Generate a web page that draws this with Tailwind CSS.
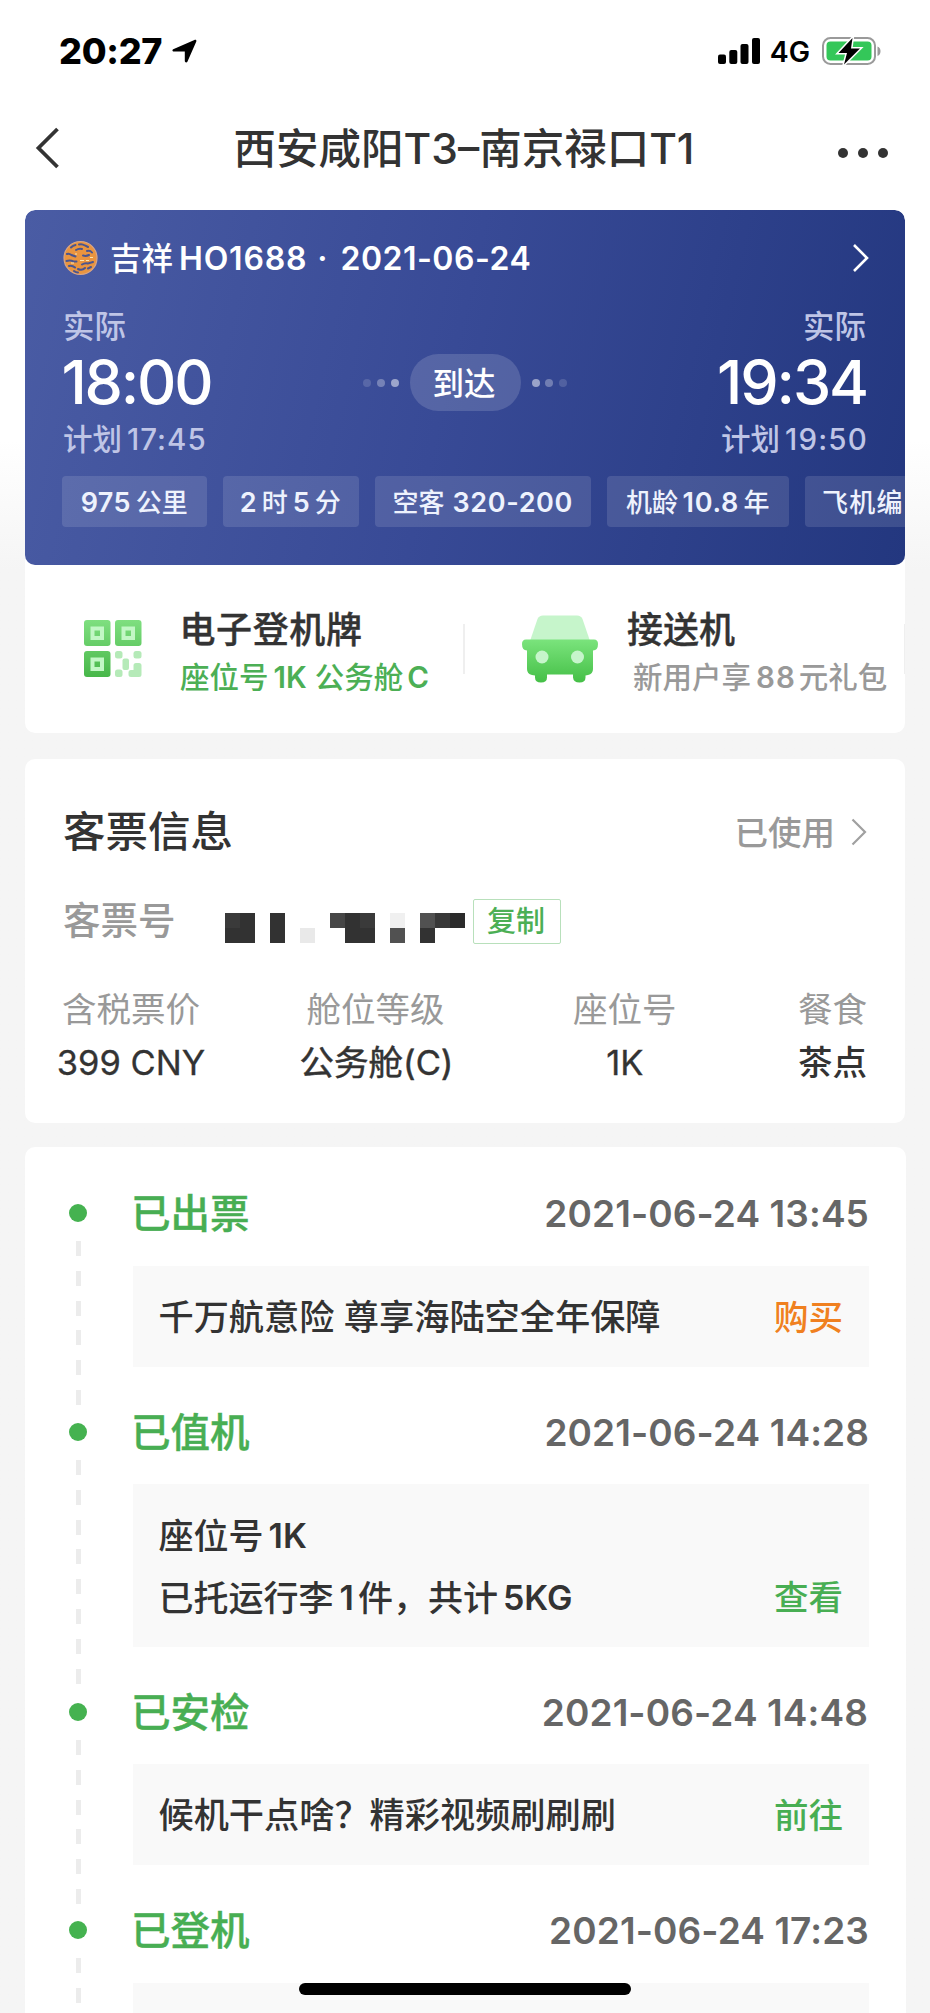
<!DOCTYPE html>
<html lang="zh-CN">
<head>
<meta charset="utf-8">
<title>航班详情</title>
<script src="https://cdn.jsdelivr.net/npm/@tailwindcss/browser@4"></script>
</head>
<body class="bg-[#f5f5f5]">
<div class="relative h-[2013px] w-[930px] overflow-hidden bg-linear-to-b from-white from-[440px] to-[#f5f5f5] to-[570px] font-['Inter','Noto_Sans_CJK_SC',sans-serif] whitespace-nowrap text-[#333]">

  <!-- Status bar -->
  <header class="flex h-[102px] items-center justify-between pr-[48px] pl-[59px] text-black">
    <div class="flex items-center gap-[10px]">
      <span class="text-[36px] font-extrabold tracking-[-0.3px]">20:27</span>
      <svg class="h-[24px] w-[25px]" viewBox="0 0 25 24"><path d="M1.2 10.2 22.4.9c1.5-.6 2.4.3 1.8 1.800l-8.800 20c-.6 1.300-2.600 1-2.600-.6V12.600H2c-1.700 0-2.100-1.800-.8-2.400z"/></svg>
    </div>
    <div class="flex items-center">
      <svg class="h-[26px] w-[42px]" viewBox="0 0 42 26"><rect y="16.500" width="8" height="9.500" rx="2"/><rect x="11.300" y="12" width="8" height="14" rx="2"/><rect x="22.500" y="6" width="8" height="20" rx="2"/><rect x="34" width="8" height="26" rx="2"/></svg>
      <span class="ml-[10px] pt-[2px] text-[28.500px] leading-none font-semibold">4G</span>
      <svg class="ml-[12px] h-[28px] w-[60px]" viewBox="0 0 60 28"><rect x="1" y="1" width="52" height="26" rx="7.500" fill="none" stroke="#9a9a9a" stroke-width="2"/><rect x="4.500" y="4.500" width="45" height="19" rx="4" fill="#34c759"/><path d="M55.500 9.500c4 1 4 8.500 0 9.500z" fill="#9a9a9a"/><path d="M30.500 1 16.500 16h8.500l-3 11.500L38 11.500h-9z" fill="#000" stroke="#fff" stroke-width="3" paint-order="stroke"/></svg>
    </div>
  </header>

  <!-- Title bar -->
  <nav class="grid h-[92px] grid-cols-[102px_1fr_98px] items-center pr-[42px] pl-[35px]">
    <svg class="h-[42px] w-[24px]" viewBox="0 0 24 42"><path d="M22.500 2 3.500 21l19 19" fill="none" stroke="#333" stroke-width="3.800"/></svg>
    <h1 class="pt-[2px] pl-[1px] text-center text-[42.500px] font-medium">西安咸阳T3–南京禄口T1</h1>
    <div class="mt-[10px] flex justify-end gap-[10px]"><i class="size-[10px] rounded-full bg-[#333]"></i><i class="size-[10px] rounded-full bg-[#333]"></i><i class="size-[10px] rounded-full bg-[#333]"></i></div>
  </nav>

  <main class="px-[25px] pt-[16px]">
    <section class="overflow-hidden rounded-[10px] bg-white">
      <!-- Flight card -->
      <div class="h-[355px] overflow-hidden rounded-[10px] bg-[linear-gradient(103deg,#4a5ca4_0%,#384a96_48%,#23377f_100%)] pt-[28px] pl-[38px] text-white">
        <div class="flex h-[40px] items-center pr-[35px]">
          <svg class="h-[36px] w-[35px]" viewBox="0 0 35 36"><circle cx="17.500" cy="18" r="16.500" fill="#e9943f" stroke="#d9a586" stroke-width="1.200"/><g fill="none" stroke="#4a5590" stroke-width="2" stroke-linecap="round"><path d="M8 7.500q2-2 4.500-2.500M16 4.500q3-1 6 1l3 1.500M4 14q2-1 4.500 1l4 1.500M13 10q3-2 6-1M24 11q3-1 5 1.500M3.500 21q4-1 7 .5h3M20 15.500q3 1 6-.5M19 24.500q3-2 6-1l5-1.500M6 26q3-1 6 1.500M15 29q4 2 7-1M25 28.500l3-1.500M11 31q2 1.500 4 1.500"/></g><path d="M17 20.500h4M23 20.500h3M12 14h2M27 17.500h3M8 23h3" stroke="#fbe3b0" stroke-width="1.200"/></svg>
          <span class="ml-[12px] pt-[2px] text-[31.500px] font-medium">吉祥</span>
          <span class="ml-[6px] pt-[2px] text-[32px] font-semibold tracking-[0.800px]">HO1688</span>
          <span class="ml-[10px] pt-[2px] text-[32px] font-semibold">·</span>
          <span class="ml-[13px] pt-[2px] text-[32px] font-semibold tracking-[0.500px]">2021-06-24</span>
          <svg class="ml-auto h-[30px] w-[18px]" viewBox="0 0 18 30"><path d="M2 2l13 13L2 28" fill="none" stroke="#fff" stroke-width="2.600"/></svg>
        </div>
        <div class="mt-[28px] flex h-[155px] justify-between pr-[38px]">
          <div class="flex w-[200px] flex-col items-start">
            <span class="text-[31.500px] leading-[42px] font-medium text-[#bfc5e6]">实际</span>
            <span class="-ml-[1.500px] text-[61px] leading-[68px] font-medium tracking-[-2.200px]">18:00</span>
            <div class="flex text-[29.500px] leading-[47px] font-medium text-[#bfc5e6]"><span>计划</span><span class="ml-[5px] tracking-[1px]">17:45</span></div>
          </div>
          <div class="mt-[48px] flex h-[57px] items-center">
            <div class="flex gap-[5.700px]"><i class="size-[8px] rounded-full bg-white/15"></i><i class="size-[8px] rounded-full bg-white/30"></i><i class="size-[8px] rounded-full bg-white/50"></i></div>
            <div class="mx-[11px] flex h-[57px] w-[111px] items-center justify-center rounded-full bg-white/15 pt-[2px] pr-[2px] text-[31.500px] font-medium">到达</div>
            <div class="flex gap-[5.700px]"><i class="size-[8px] rounded-full bg-white/50"></i><i class="size-[8px] rounded-full bg-white/30"></i><i class="size-[8px] rounded-full bg-white/15"></i></div>
          </div>
          <div class="flex w-[200px] flex-col items-end">
            <span class="pr-[1px] text-[31.500px] leading-[42px] font-medium text-[#bfc5e6]">实际</span>
            <span class="text-[61px] leading-[68px] font-medium tracking-[-2.100px]">19:34</span>
            <div class="-mr-px flex text-[29.500px] leading-[47px] font-medium text-[#bfc5e6]"><span>计划</span><span class="ml-[5px] tracking-[1.200px]">19:50</span></div>
          </div>
        </div>
        <div class="mt-[15px] -ml-px flex gap-[16.500px] text-[26px] leading-[53px] font-medium text-[#eef2fd]">
          <div class="flex h-[51px] w-[144.500px] shrink-0 justify-center gap-[5px] rounded-[4px] bg-white/12"><span class="text-[27px] font-semibold tracking-[0.300px]">975</span><span>公里</span></div>
          <div class="flex h-[51px] w-[135.500px] shrink-0 justify-center gap-[5px] rounded-[4px] bg-white/12 pr-[1px]"><span class="text-[27px] font-semibold">2</span><span>时</span><span class="text-[27px] font-semibold">5</span><span>分</span></div>
          <div class="flex h-[51px] w-[215.500px] shrink-0 justify-center gap-[8px] rounded-[4px] bg-white/12"><span>空客</span><span class="text-[27px] font-semibold tracking-[0.600px]">320-200</span></div>
          <div class="flex h-[51px] w-[181.500px] shrink-0 justify-center gap-[4.500px] rounded-[4px] bg-white/12"><span>机龄</span><span class="text-[27px] font-semibold tracking-[0.700px]">10.8</span><span>年</span></div>
          <div class="flex h-[51px] w-[181.500px] shrink-0 rounded-[4px] bg-white/12 pl-[17px] tracking-[1.200px]">飞机编</div>
        </div>
      </div>
      <!-- Services -->
      <div class="flex h-[168px] items-center overflow-hidden">
        <div class="flex w-[438px] shrink-0 items-center pl-[59px]">
          <svg class="h-[58px] w-[58px]" viewBox="0 0 58 58"><defs><linearGradient id="qr" x1="0" y1="0" x2="0" y2="58" gradientUnits="userSpaceOnUse"><stop stop-color="#7fdf80"/><stop offset="1" stop-color="#46b648"/></linearGradient></defs><g fill="url(#qr)"><rect width="26.500" height="26" rx="3"/><rect x="31" width="26.500" height="26" rx="3"/><rect y="31" width="26.500" height="26" rx="3"/></g><g fill="none" stroke="#c2f7c5" stroke-width="4"><rect x="8.500" y="8.500" width="9.500" height="9.500"/><rect x="39.500" y="8.500" width="9.500" height="9.500"/><rect x="8.500" y="39.500" width="9.500" height="9.500"/></g><g fill="#b5eab8"><rect x="31" y="31" width="7.500" height="7.500" rx="2.500"/><rect x="49.500" y="31" width="8" height="7.500" rx="2.500"/><rect x="38.500" y="38.500" width="6.500" height="11.500" rx="2"/><rect x="31" y="49.500" width="7.500" height="7.500" rx="2.500"/><path d="M52 43h3a2.500 2.500 0 0 1 2.500 2.500v9a2.500 2.500 0 0 1-2.500 2.500h-8a2.500 2.500 0 0 1-2.500-2.500v-2a2.500 2.500 0 0 1 2.500-2.500h2.500v-4.500A2.500 2.500 0 0 1 52 43z"/></g></svg>
          <div class="mt-[5px] ml-[38px]">
            <div class="-ml-[0.500px] text-[36px] leading-[50px] font-medium tracking-[0.600px] [-webkit-text-stroke:0.400px_#333]">电子登机牌</div>
            <div class="flex text-[29.500px] leading-[44px] font-medium text-[#4caf55]"><span>座位号</span><span class="ml-[5px] font-semibold">1K</span><span class="ml-[8px]">公务舱</span><span class="ml-[4px] font-semibold">C</span></div>
          </div>
        </div>
        <i class="h-[50px] w-[2px] shrink-0 bg-[#efefef]"></i>
        <div class="flex w-[439px] shrink-0 items-center pl-[57px]">
          <svg class="h-[68px] w-[76px]" viewBox="0 0 76 68"><defs><linearGradient id="car" x1="0" y1="24" x2="0" y2="68" gradientUnits="userSpaceOnUse"><stop stop-color="#7be47d"/><stop offset="1" stop-color="#44bf46"/></linearGradient></defs><path d="M8 26 15.500 4Q17 .5 21 .5h34q4 0 5.500 3.500L68 26z" fill="#c6f5cb"/><path d="M4 24.500h68q4 0 4 4.500 0 6.500-5 6.500V54q0 5-5 6l-2.500.5v2q0 5-6 5t-6.500-5v-3H25v3q0 5-6 5t-6-5v-2L10 60q-5-1-5-6V35.500q-5 0-5-6.500 0-4.500 4-4.500z" fill="url(#car)"/><circle cx="20" cy="42" r="6.500" fill="#c6f5cb"/><circle cx="55.500" cy="42" r="6.500" fill="#c6f5cb"/></svg>
          <div class="mt-[5px] ml-[29px]">
            <div class="text-[36px] leading-[50px] font-medium [-webkit-text-stroke:0.400px_#333]">接送机</div>
            <div class="ml-[6px] flex text-[29.500px] leading-[44px] font-medium text-[#999]"><span>新用户享</span><span class="ml-[5px] font-semibold tracking-[1px]">88</span><span class="ml-[3px]">元礼包</span></div>
          </div>
        </div>
        <i class="h-[50px] w-[2px] shrink-0 bg-[#efefef]"></i>
      </div>
    </section>

    <!-- Ticket -->
    <section class="mt-[26px] h-[364px] rounded-[10px] bg-white px-[38px]">
      <div class="flex h-[144px] items-center justify-between pt-[2px]">
        <h2 class="text-[42.500px] font-medium">客票信息</h2>
        <div class="flex items-center text-[33.500px] font-medium text-[#999]"><span class="pt-[2px]">已使用</span><svg class="ml-[16px] h-[28px] w-[16px]" viewBox="0 0 16 28"><path d="M1.500 1.500 14 14 1.500 26.500" fill="none" stroke="#a0a0a0" stroke-width="2.200"/></svg></div>
      </div>
      <div class="flex h-[36px] items-center">
        <span class="text-[37.500px] font-medium text-[#999]">客票号</span>
        <svg class="mt-[14px] ml-[49.500px] h-[30px] w-[240px]" viewBox="0 0 16 2" preserveAspectRatio="none" shape-rendering="crispEdges"><path d="M0 0h2v2H0zM3 0h1v2H3zM8 0h2v2H8zM13 1h1v1h-1z" fill="#323232"/><path d="M0 0h1v1H0zM9 0h1v1H9z" fill="#3a3a3a"/><path d="M7 0h1v1H7z" fill="#464646"/><path d="M5 1h1v1H5z" fill="#e9e9e9"/><path d="M11 0h1v1h-1z" fill="#f0f0f0"/><path d="M11 1h1v1h-1zM13 0h1v1h-1z" fill="#515151"/><path d="M14 0h1v1h-1z" fill="#383838"/><path d="M15 0h1v1h-1z" fill="#2b2b2b"/></svg>
        <button class="ml-[8px] flex h-[45px] w-[88px] items-center justify-center rounded-[2px] border-[1.500px] border-[#b8e0bb] pt-[2px] pr-[2px] text-[29px] font-medium text-[#4caf55]">复制</button>
      </div>
      <div class="mt-[44px] -ml-[5px] flex text-[34.500px] leading-[53px]">
        <div class="flex w-[146px] flex-col items-center"><span class="text-[#999]">含税票价</span><span class="[-webkit-text-stroke:0.300px_#333]">399 CNY</span></div>
        <div class="ml-[96.500px] flex w-[150px] flex-col items-center"><span class="text-[#999]">舱位等级</span><span class="ml-[2px] [-webkit-text-stroke:0.500px_#333]">公务舱(C)</span></div>
        <div class="ml-[122.500px] flex flex-col items-center"><span class="text-[#999]">座位号</span><span class="[-webkit-text-stroke:0.300px_#333]">1K</span></div>
        <div class="ml-auto flex flex-col items-center"><span class="text-[#999]">餐食</span><span class="font-medium">茶点</span></div>
      </div>
    </section>

    <!-- Journey timeline -->
    <section class="mt-[24px] -mr-px h-[900px] rounded-t-[10px] bg-white pt-[46px] pr-[37px]">
      <div class="flex h-[219px]">
        <div class="flex w-[107.500px] flex-col items-center pt-[11px] pr-[1.500px]"><i class="size-[18px] rounded-full bg-[#45b250]"></i><i class="mt-[19px] h-[164px] w-[5px] bg-[repeating-linear-gradient(#ececec_0_15px,transparent_15px_29.8px)]"></i></div>
        <div class="flex-1">
          <div class="flex h-[40px] items-center justify-between"><h3 class="-ml-[1.500px] pt-[3px] text-[39.500px] font-medium text-[#48ae53] [-webkit-text-stroke:0.400px_#48ae53]">已出票</h3><time class="pt-[2px] text-[37px] font-semibold tracking-[0.100px] text-[#666]">2021-06-24 13:45</time></div>
          <div class="mt-[33px] flex h-[101px] items-center justify-between bg-[#f9f9f9] px-[26px] pt-[2px] text-[35.200px] font-medium"><span>千万航意险 尊享海陆空全年保障</span><span class="text-[34.500px] text-[#f08020]">购买</span></div>
        </div>
      </div>
      <div class="flex h-[280px]">
        <div class="flex w-[107.500px] flex-col items-center pt-[11px] pr-[1.500px]"><i class="size-[18px] rounded-full bg-[#45b250]"></i><i class="mt-[19px] h-[224px] w-[5px] bg-[repeating-linear-gradient(#ececec_0_15px,transparent_15px_29.8px)]"></i></div>
        <div class="flex-1">
          <div class="flex h-[40px] items-center justify-between"><h3 class="-ml-[1.500px] pt-[3px] text-[39.500px] font-medium text-[#48ae53] [-webkit-text-stroke:0.400px_#48ae53]">已值机</h3><time class="pt-[2px] text-[37px] font-semibold tracking-[0.100px] text-[#666]">2021-06-24 14:28</time></div>
          <div class="mt-[32px] flex h-[163px] flex-col justify-center bg-[#f9f9f9] px-[26px] pt-[2px] text-[35px] leading-[62px] font-medium">
            <div class="flex"><span>座位号</span><span class="ml-[5px] text-[34px] font-semibold">1K</span></div>
            <div class="flex"><span>已托运行李</span><span class="ml-[6px] text-[34px] font-semibold">1</span><span class="ml-[4px]">件，共计</span><span class="ml-[5px] text-[34px] font-semibold">5KG</span><span class="ml-auto text-[34.500px] text-[#48ae53]">查看</span></div>
          </div>
        </div>
      </div>
      <div class="flex h-[218px]">
        <div class="flex w-[107.500px] flex-col items-center pt-[11px] pr-[1.500px]"><i class="size-[18px] rounded-full bg-[#45b250]"></i><i class="mt-[19px] h-[164px] w-[5px] bg-[repeating-linear-gradient(#ececec_0_15px,transparent_15px_29.8px)]"></i></div>
        <div class="flex-1">
          <div class="flex h-[40px] items-center justify-between"><h3 class="-ml-[1.500px] pt-[3px] text-[39.500px] font-medium text-[#48ae53] [-webkit-text-stroke:0.400px_#48ae53]">已安检</h3><time class="pt-[2px] pr-[1px] text-[37px] font-semibold tracking-[0.100px] text-[#666]">2021-06-24 14:48</time></div>
          <div class="mt-[32px] flex h-[101px] items-center justify-between bg-[#f9f9f9] px-[26px] pt-[2px] text-[35.200px] font-medium"><span>候机干点啥？精彩视频刷刷刷</span><span class="text-[34.500px] text-[#48ae53]">前往</span></div>
        </div>
      </div>
      <div class="flex">
        <div class="flex w-[107.500px] flex-col items-center pt-[11px] pr-[1.500px]"><i class="size-[18px] rounded-full bg-[#45b250]"></i><i class="mt-[19px] h-[164px] w-[5px] bg-[repeating-linear-gradient(#ececec_0_15px,transparent_15px_29.8px)]"></i></div>
        <div class="flex-1">
          <div class="flex h-[40px] items-center justify-between"><h3 class="-ml-[1.500px] pt-[3px] text-[39.500px] font-medium text-[#48ae53] [-webkit-text-stroke:0.400px_#48ae53]">已登机</h3><time class="pt-[2px] text-[37px] font-semibold tracking-[0.100px] text-[#666]">2021-06-24 17:23</time></div>
          <div class="mt-[33px] h-[101px] bg-[#f9f9f9]"></div>
        </div>
      </div>
    </section>
  </main>

  <!-- Home indicator -->
  <div class="absolute top-[1983px] left-[299px] h-[12px] w-[332px] rounded-full bg-black"></div>
</div>
</body>
</html>
